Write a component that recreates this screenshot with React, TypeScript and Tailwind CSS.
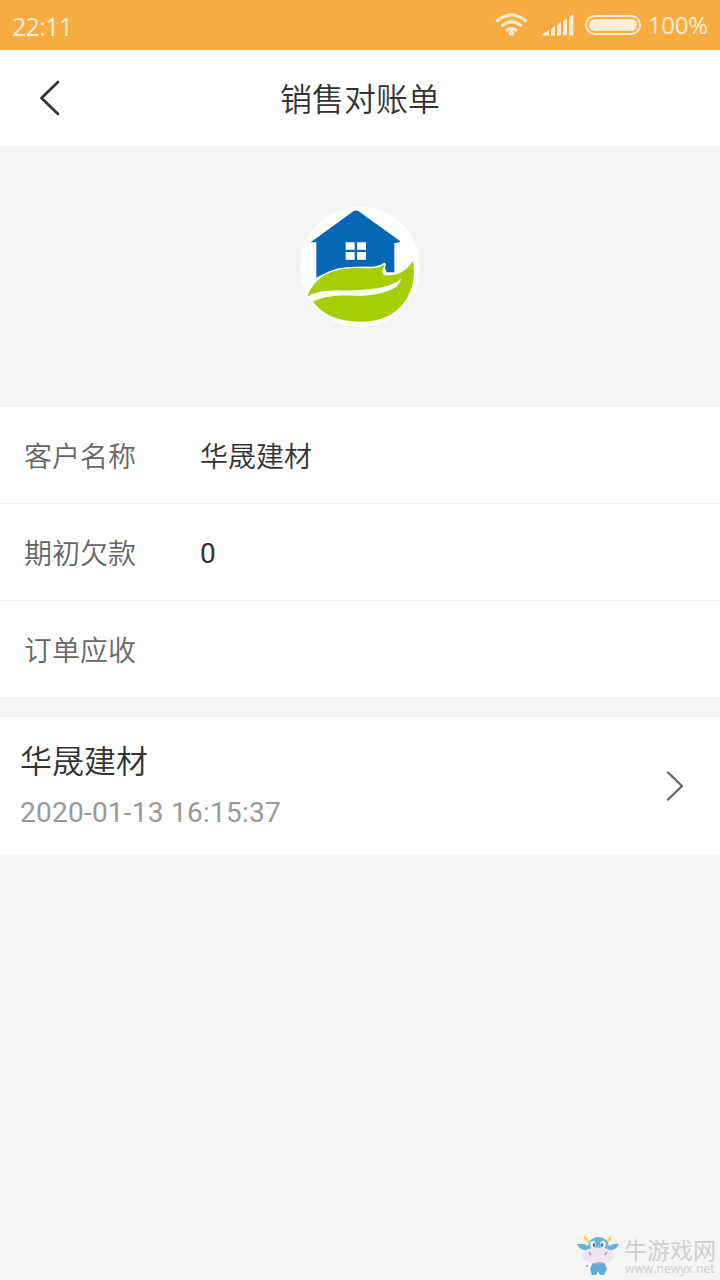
const rows = [
  { label: '客户名称', value: '华晟建材' },
  { label: '期初欠款', value: '0' },
  { label: '订单应收', value: '' },
]

function StatusBar() {
  return (
    <div className="flex h-[50px] items-center justify-between bg-[#f6ac43] pl-3 pr-3 font-['Open_Sans','Noto_Sans',sans-serif] text-[#feedd2]">
      <span className="pt-px text-[25px] leading-[50px] tracking-[-0.7px]">22:11</span>
      <div className="flex items-center">
        <svg className="h-[26px] w-[34px]" viewBox="0 0 34 26" fill="none" stroke="currentColor" strokeWidth="3.1">
          <path d="M1.5 9.5 Q16.5 -3.5 31.5 9.5" />
          <path d="M6.5 14.2 Q16.5 5.5 26.5 14.2" />
          <path d="M11 19 Q16.5 14 22 19" />
          <circle cx="16.5" cy="21" r="2.8" fill="currentColor" stroke="none" />
        </svg>
        <svg className="ml-[13px] h-[22px] w-8" viewBox="0 0 32 22" fill="currentColor">
          <path d="M0 21.5V20.5L7 16V21.5ZM9 21.5V15L13 12V21.5ZM15 21.5V11L19 8V21.5ZM21 21.5V7L25 4V21.5ZM27 21.5V3L31.3 0V21.5Z" />
        </svg>
        <div className="ml-[11px] h-5 w-14 rounded-full border-2 border-current p-[2px]">
          <div className="h-full rounded-full bg-current" />
        </div>
        <span className="ml-[7px] text-[24px] leading-[50px] tracking-[-0.2px]">100%</span>
      </div>
    </div>
  )
}

function Logo() {
  return (
    <svg className="size-[120px]" viewBox="30 30 360 360">
      <circle cx="210" cy="210" r="180" fill="#fff" />
      <path d="M190 43Q198 38 206 43L331 133Q329 138 313 138V226H290L282 203L255 209Q145 204 79 242V136H62Z" fill="#0668b5" />
      <path d="M167 136H194V158H167ZM201 136H228V158H201ZM167 165H194V188H167ZM201 165H228V188H201Z" fill="#fff" />
      <path
        d="M50 297C72 239 125 211 196 211C230 211 259 218 284 199C292 204 269 227 284 232C325 238 350 220 370 186C386 269 347 376 210 376C133 376 92 349 66 314Z"
        fill="#a5ce05"
        stroke="#fff"
        strokeWidth="4"
        strokeLinejoin="round"
      />
      <path d="M50 299C94 274 140 282 199 280C259 276 310 268 332 245C334 278 261 297 202 296C139 294 102 297 66 315Z" fill="#fff" />
    </svg>
  )
}

function Watermark() {
  return (
    <div className="absolute right-0 bottom-0 flex h-[50px] w-[144px]">
      <svg className="mt-[4px] h-[42px] w-[44px] shrink-0" viewBox="0 0 44 42">
        <path d="M8 1Q7 9 16 9ZM35 1Q37 9 28 9Z" fill="#f5d264" />
        <path d="M1 10Q8 9 12 12Q14 3 22 3Q31 3 33 12Q38 9 43 10Q40 17 33 16H11Q4 17 1 10Z" fill="#65b6df" />
        <path d="M17 28H28L31 35L28 41H24L22 37L20 41H16L14 35Z" fill="#5caed8" />
        <circle cx="11" cy="32" r="1" fill="#5caed8" />
        <ellipse cx="22" cy="21.5" rx="16" ry="8" fill="#f1e4f2" />
        <ellipse cx="17" cy="10.5" rx="2.7" ry="3.5" fill="#fff" />
        <ellipse cx="27" cy="10.5" rx="2.7" ry="3.5" fill="#fff" />
        <ellipse cx="18" cy="11" rx="1.2" ry="2" fill="#446d87" />
        <ellipse cx="26" cy="11" rx="1.2" ry="2" fill="#446d87" />
        <path d="M13 18L15 21M31 18L29 21" stroke="#a896a9" strokeWidth="1.5" />
        <path d="M20 28H27Q25 32 22 30Z" fill="#ed91b1" />
      </svg>
      <div className="ml-[4px] pt-[9px] whitespace-nowrap text-[#cfcfcf]">
        <div className="text-[23px] leading-[26px]">牛游戏网</div>
        <div className="-mt-[2px] ml-px font-['Open_Sans',sans-serif] text-[12px] leading-[12px] tracking-[0.1px]">www.newyx.net</div>
      </div>
    </div>
  )
}

export default function App() {
  return (
    <div className="relative min-h-screen bg-[#f5f5f5] font-[Roboto,'Noto_Sans_CJK_SC',sans-serif] text-[#333]">
      <StatusBar />
      <header className="grid h-24 grid-cols-[100px_1fr_100px] items-center bg-white">
        <svg className="ml-[39px] h-9 w-[22px]" viewBox="0 0 22 36" fill="none" stroke="currentColor" strokeWidth="2.7" strokeLinecap="round" strokeLinejoin="round">
          <path d="M19 2L2.5 18L19 34" />
        </svg>
        <h1 className="pt-[4px] text-center text-[32px] leading-[48px] font-[350]">销售对账单</h1>
      </header>

      <div className="flex h-[261px] justify-center pt-[61px]">
        <Logo />
      </div>

      <section className="divide-y divide-[#f2f2f2] bg-white">
        {rows.map((row) => (
          <div key={row.label} className="flex h-[97px] items-center pt-[5px] pl-6 text-[28px] font-[350] last:h-24">
            <span className="w-44 text-[#666]">{row.label}</span>
            <span className={row.value === '0' ? 'pb-[2px] font-normal' : ''}>{row.value}</span>
          </div>
        ))}
      </section>

      <section className="mt-5 flex h-[137px] items-center justify-between bg-white pr-9 pl-5">
        <div>
          <div className="pt-[2px] text-[32px] leading-[46px] font-[350]">华晟建材</div>
          <div className="mt-[7px] text-[28px] leading-[42px] tracking-[0.24px] text-[#999]">2020-01-13 16:15:37</div>
        </div>
        <svg className="h-8 w-[19px]" viewBox="0 0 19 32" fill="none" stroke="#666" strokeWidth="2.4" strokeLinecap="round" strokeLinejoin="round">
          <path d="M3 2.5L17 16L3 29.5" />
        </svg>
      </section>

      <Watermark />
    </div>
  )
}
